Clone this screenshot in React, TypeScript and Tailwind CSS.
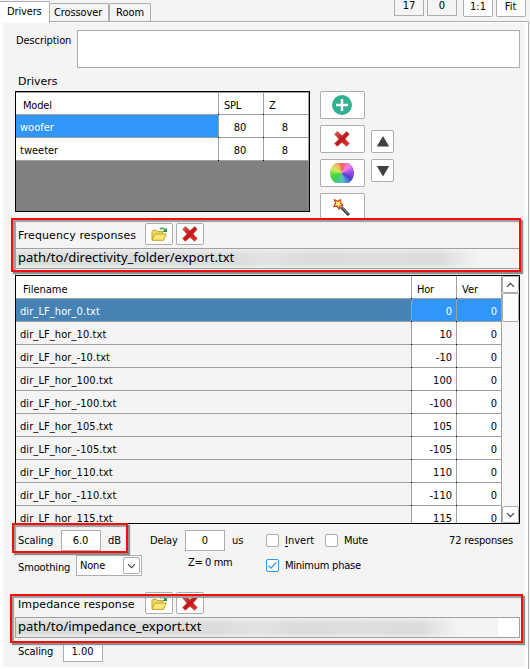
import React from "react";

const files: [string, string][] = [
  ["dir_LF_hor_0.txt", "0"],
  ["dir_LF_hor_10.txt", "10"],
  ["dir_LF_hor_-10.txt", "-10"],
  ["dir_LF_hor_100.txt", "100"],
  ["dir_LF_hor_-100.txt", "-100"],
  ["dir_LF_hor_105.txt", "105"],
  ["dir_LF_hor_-105.txt", "-105"],
  ["dir_LF_hor_110.txt", "110"],
  ["dir_LF_hor_-110.txt", "-110"],
  ["dir_LF_hor_115.txt", "115"],
];

const wide = "font-['DejaVu_Sans','Verdana',sans-serif]";

// Black pixel where a column line meets a row line
const tick = "relative after:absolute after:-left-px after:-bottom-px after:size-px after:bg-black";

function FolderIcon() {
  return (
    <svg width="16" height="15" viewBox="0 0 16 15">
      <path d="M1 12.5V4.5l1-1.2h3.2l1.2 1.4h5.2v2.5" fill="#f3dc6c" stroke="#c09a20" />
      <path d="M1 13.3 4 7h11.3l-2.8 6.3z" fill="#fbe774" stroke="#c9a227" strokeLinejoin="round" />
      <path d="M8.8 2.2q3-2.4 5 .6" fill="none" stroke="#279345" strokeWidth="1.3" />
      <path d="M15.9.8v4.2h-4.2z" fill="#168a36" />
    </svg>
  );
}

function CrossIcon() {
  return (
    <svg width="16" height="16" viewBox="0 0 16 16">
      <defs>
        <linearGradient id="cross" x1="0" y1="0" x2="1" y2="1">
          <stop offset="0" stopColor="#d85a5a" />
          <stop offset=".5" stopColor="#c01818" />
          <stop offset="1" stopColor="#e83a36" />
        </linearGradient>
      </defs>
      <path
        d="M3.3.6 8 4.8 12.7.6l2.5 2.6L11 8l4.2 4.6-2.6 2.7L8 11.2l-4.7 4.1L.7 12.6 5 8 .7 3.2z"
        fill="url(#cross)"
        stroke="#c43030"
        strokeWidth=".6"
        strokeLinejoin="round"
      />
    </svg>
  );
}

function WandIcon() {
  return (
    <svg width="17" height="17" viewBox="0 0 17 17">
      <path d="M8 8l8 8" stroke="#2c2c2c" strokeWidth="3" />
      <path d="M8.6 8.2l7 7" stroke="#b8b8b8" strokeWidth="1" />
      <path
        d="M1.5.8l3 1.5L7.6.7l.2 3.2 2 2.2-2.9.8L6 10 4.2 7.2.8 7.6 2.5 4.5z"
        fill="#ffe873"
        stroke="#d9401c"
        strokeWidth="1.2"
      />
    </svg>
  );
}

function Btn({ className, children }: { className: string; children: React.ReactNode }) {
  return (
    <button className={`flex shrink-0 items-center justify-center rounded-[2px] border border-[#adadad] bg-white ${className}`}>
      {children}
    </button>
  );
}

function Chevron({ up = false }: { up?: boolean }) {
  return (
    <svg width="9" height="6" viewBox="0 0 9 6">
      <path d={up ? "M1 4.8 4.5 1.3 8 4.8" : "M1 1.2 4.5 4.7 8 1.2"} fill="none" stroke="#444" strokeWidth="1.2" />
    </svg>
  );
}

function Check({ checked = false }: { checked?: boolean }) {
  return (
    <span
      className={`flex size-[13px] shrink-0 items-center justify-center rounded-[2px] border bg-white ${
        checked ? "border-[#3096fa]" : "border-[#adadad]"
      }`}
    >
      {checked && (
        <svg width="11" height="11" viewBox="0 0 11 11">
          <path d="M1.5 5.8 4 8.2 9.5 2.2" fill="none" stroke="#3096fa" strokeWidth="1.2" />
        </svg>
      )}
    </span>
  );
}

function DriverRow({ name, selected = false }: { name: string; selected?: boolean }) {
  return (
    <div className="flex h-[23px] border-b border-[#a0a0a0] bg-white leading-[25px]">
      <div className={`w-[202px] pl-1 ${selected ? "bg-[#3096fa] text-white" : ""}`}>{name}</div>
      <div className={`w-[45px] border-l border-[#a0a0a0] pr-0.5 text-center ${tick}`}>80</div>
      <div className={`w-[46px] border-x border-[#a0a0a0] pr-0.5 text-center ${tick}`}>8</div>
    </div>
  );
}

function FileHeader({ label }: { label: string }) {
  return (
    <div className="flex h-[22px] items-center">
      <span className={`w-[127px] pt-0.5 tracking-[0.11px] whitespace-nowrap ${wide}`}>{label}</span>
      <Btn className="h-[22px] w-7"><FolderIcon /></Btn>
      <Btn className="ml-[3px] h-[22px] w-7"><CrossIcon /></Btn>
    </div>
  );
}

// Path field text with the remainder of the path smudged out
function PathText({ text, className }: { text: string; className: string }) {
  return (
    <div
      className={`bg-[linear-gradient(180deg,#f4f4f4b0_0%,#f4f4f400_30%,#f4f4f400_80%,#f4f4f4b0_100%),linear-gradient(90deg,#dcdcdc_0%,#dcdcdc_42%,#e3e3e3_50%,#dcdcdc_58%,#dedede_72%,#dcdcdc_84%,#f4f4f4_92%)] pl-[2px] ${className}`}
    >
      {text}
    </div>
  );
}

export default function App() {
  return (
    <div className="relative h-[669px] w-[530px] overflow-hidden bg-[#f4f4f4] font-['DejaVu_Sans_Condensed','DejaVu_Sans',sans-serif] text-[11px] leading-[13px] text-black">
      <header className="flex h-[21px] items-start">
        <div className="relative z-10 mt-px h-[22px] w-[50px] rounded-tr-[2px] border-t border-r border-[#adadad] bg-white pl-[7px] leading-[20px] tracking-[-0.15px]">Drivers</div>
        <div className="mt-[3px] h-[18px] w-[59px] rounded-t-[2px] border-t border-r border-[#adadad] pl-1 leading-[17px] tracking-[-0.1px]">Crossover</div>
        <div className="mt-[3px] h-[18px] w-[42px] rounded-t-[2px] border-x border-t border-[#adadad] pl-[6px] leading-[17px]">Room</div>
        <div className="ml-[243px] flex text-center leading-[11px]">
          <div className="h-4 w-[30px] border-x border-b border-[#adadad]">17</div>
          <div className="ml-[3px] h-4 w-[30px] border-x border-b border-[#adadad]">0</div>
          <div className="ml-[6px] h-[17px] w-[30px] rounded-b-[2px] border-x border-b border-[#adadad] bg-white leading-[13px]">1:1</div>
          <div className="ml-[3px] h-[17px] w-[30px] rounded-b-[2px] border-x border-b border-[#adadad] bg-white pr-px leading-[13px]">Fit</div>
        </div>
      </header>

      <div className="h-[648px] w-[529px] rounded-tr-[2px] border-t border-r border-[#adadad] bg-white pt-px pr-[3px] pl-[3px]">
        <main className="h-[644px] bg-[#f4f4f4] pt-[7px] pl-3">
          <div className="flex h-[38px]">
            <span className="w-[62px] pt-[4px] pl-px tracking-[-0.1px]">Description</span>
            <div className="h-[38px] w-[443px] border border-[#adadad] bg-white" />
          </div>

          <div className={`h-[23px] pt-[7px] pl-[3px] ${wide}`}>Drivers</div>

          <div className="flex h-[127px]">
            <div className="h-[121px] w-[295px] border border-black bg-[#808080]">
              <div className="flex h-[23px] border-y border-[#a0a0a0] bg-white leading-[25px]">
                <div className="w-[202px] pl-[7px] tracking-[-0.2px]">Model</div>
                <div className={`w-[45px] border-l border-[#a0a0a0] pl-[5px] tracking-[-0.2px] ${tick}`}>SPL</div>
                <div className={`w-[46px] border-x border-[#a0a0a0] pl-[5px] ${tick}`}>Z</div>
              </div>
              <DriverRow name="woofer" selected />
              <DriverRow name="tweeter" />
            </div>
            <div className="ml-[10px] flex flex-col gap-[6px]">
              <Btn className="h-7 w-[45px] pr-0.5">
                <svg width="20" height="20" viewBox="0 0 20 20">
                  <circle cx="10" cy="10" r="10" fill="#32b092" />
                  <path d="M10 4v12M4 10h12" stroke="#fff" strokeWidth="2.4" />
                </svg>
              </Btn>
              <Btn className="h-7 w-[45px] pr-0.5"><CrossIcon /></Btn>
              <Btn className="h-7 w-[45px] pr-0.5">
                <span className="flex h-5 w-6 items-center overflow-hidden">
                  <span className="size-6 shrink-0 rounded-full bg-[conic-gradient(#f45c5c,#ef86ee_12%,#b050e8_22%,#4a40d0_34%,#55bfd5_48%,#48cc70_60%,#40d838_70%,#d0e860_81%,#f4c060_91%,#f45c5c)]" />
                </span>
              </Btn>
              <Btn className="h-7 w-[45px] pr-0.5"><WandIcon /></Btn>
            </div>
            <div className="ml-[6px] flex flex-col gap-[6px] pt-[39px]">
              <Btn className="size-[23px]">
                <svg width="14" height="12" viewBox="0 0 14 12"><path d="M7 0 13.2 10.5H.8z" fill="#404040" /></svg>
              </Btn>
              <Btn className="size-[23px]">
                <svg width="14" height="12" viewBox="0 0 14 12"><path d="M7 11.5.8 1h12.4z" fill="#404040" /></svg>
              </Btn>
            </div>
          </div>

          <section className="mt-[2px] h-[55px] w-[505px] border-t border-l border-[#a0a0a0] bg-[#f4f4f4] pl-[2px]">
            <div className="mt-[2px]"><FileHeader label="Frequency responses" /></div>
            <div className="mt-[3px] -ml-[2px] h-[21px] border-y border-[#a0a0a0] font-['Noto_Sans','Open_Sans',sans-serif] text-[13px] leading-[17px] whitespace-nowrap">
              <PathText className="h-[19px] w-full" text="path/to/directivity_folder/export.txt" />
            </div>
          </section>

          <div className="flex h-[249px] w-[505px] overflow-hidden border border-black bg-white">
            <div className="w-[486px]">
              <div className="flex h-[23px] border-b border-[#a0a0a0] leading-[27px]">
                <div className="w-[395px] pl-[7px]">Filename</div>
                <div className={`w-[45px] border-l border-[#a0a0a0] pl-[5px] tracking-[-0.2px] ${tick}`}>Hor</div>
                <div className={`w-[46px] border-x border-[#a0a0a0] pl-[5px] ${tick}`}>Ver</div>
              </div>
              {files.map(([name, hor], i) => (
                <div key={name} className={`flex h-[23px] border-b border-[#a0a0a0] leading-[25px] ${i === 0 ? "text-white" : ""}`}>
                  <div className={`w-[395px] pl-1 tracking-[0.09px] ${i === 0 ? "bg-[#4682b4]" : "bg-[#f4f4f4]"}`}>{name}</div>
                  <div className={`w-[45px] border-l border-[#a0a0a0] pr-[4px] text-right ${tick} ${i === 0 ? "bg-[#3096fa]" : ""}`}>{hor}</div>
                  <div className={`w-[46px] border-x border-[#a0a0a0] pr-[4px] text-right ${tick} ${i === 0 ? "bg-[#3096fa]" : ""}`}>0</div>
                </div>
              ))}
            </div>
            <div className="flex w-[17px] flex-col bg-[#f7f7f7]">
              <Btn className="h-[17px] w-[17px]"><Chevron up /></Btn>
              <Btn className="h-[29px] w-[17px]">{null}</Btn>
              <Btn className="mt-auto h-[17px] w-[17px]"><Chevron /></Btn>
            </div>
          </div>

          <div className="mt-[6px] flex h-[21px] items-center pl-[3px]">
            <span className="w-[43px] tracking-[-0.1px]">Scaling</span>
            <span className="h-[21px] w-10 border border-[#adadad] bg-white pr-px text-center leading-[20px]">6.0</span>
            <span className="w-[49px] pl-[7px]">dB</span>
            <span className="w-[35px] tracking-[-0.15px]">Delay</span>
            <span className="h-[21px] w-10 border border-[#adadad] bg-white text-center leading-[20px]">0</span>
            <span className="w-[41px] pl-[7px]">us</span>
            <Check />
            <span className="w-[46px] pl-[6px]"><u className="underline-offset-2">I</u>nvert</span>
            <Check />
            <span className="w-[111px] pl-[6px] tracking-[-0.25px]">Mute</span>
            <span className="-mt-px tracking-[-0.15px] whitespace-nowrap">72 responses</span>
          </div>

          <div className="mt-1 flex h-[21px] items-center pl-[3px]">
            <span className="w-[58px] pt-[3px] tracking-[-0.15px]">Smoothing</span>
            <span className="flex h-[21px] w-[66px] items-center justify-between border border-[#adadad] bg-white pr-px pl-[3px]">
              <span className="tracking-[-0.2px]">None</span>
              <Btn className="h-[17px] w-[17px]"><Chevron /></Btn>
            </span>
            <span className="-mt-[6px] w-[78px] pl-[46px] tracking-[-0.4px] whitespace-nowrap">Z= 0 mm</span>
            <span className="ml-[46px] flex h-[17px] items-center gap-[6px] tracking-[-0.24px]"><Check checked />Minimum phase</span>
          </div>

          <div className="mt-[16px] pl-[3px]"><FileHeader label="Impedance response" /></div>
          <div className="mt-[3px] flex h-[21px] w-[505px] border border-[#a0a0a0] bg-white font-['Noto_Sans','Open_Sans',sans-serif] text-[13px] leading-[17px] whitespace-nowrap">
            <PathText className="h-[19px] w-[482px]" text="path/to/impedance_export.txt" />
          </div>
          <div className="mt-[3px] flex h-[21px] items-center pl-[3px]">
            <span className="w-[45px] tracking-[-0.1px]">Scaling</span>
            <span className="h-[21px] w-10 border border-[#adadad] bg-white pr-px text-center leading-[19px]">1.00</span>
          </div>
        </main>
      </div>

      {/* Annotation frames over the form */}
      <div className="absolute top-[218px] left-[11px] z-20 h-[54px] w-[510px] border-2 border-[#ff0a05] shadow-[2px_2px_1px_#8c8c8c,inset_2px_2px_1px_#9c9c9c]" />
      <div className="absolute top-[523px] left-[12px] z-20 h-[30px] w-[116px] border-2 border-[#ff0a05] shadow-[2px_2px_1px_#8c8c8c,inset_2px_2px_1px_#9c9c9c]" />
      <div className="absolute top-[594px] left-[10px] z-20 h-[49px] w-[513px] border-2 border-[#ff0a05] shadow-[2px_2px_1px_#8c8c8c,inset_2px_2px_1px_#9c9c9c]" />
    </div>
  );
}
